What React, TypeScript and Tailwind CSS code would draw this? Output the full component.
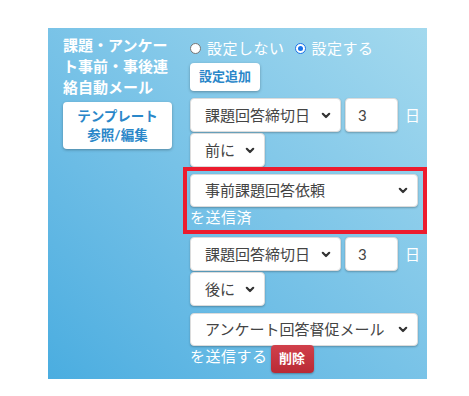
import React from "react";

const Chevron = () => (
  <svg width="10" height="7" viewBox="0 0 10 7" className="shrink-0">
    <path d="M1.8 1.8 L5 5 L8.2 1.8" fill="none" stroke="#333" strokeWidth="2.2" strokeLinecap="round" strokeLinejoin="round" />
  </svg>
);

const Sel = ({ text, w, h = "h-[34px]" }: { text: string; w: string; h?: string }) => (
  <div
    className={`${w} ${h} flex items-center justify-between bg-white rounded-[4px] border border-[#dcdcdc] shadow-[0_1px_2px_rgba(0,0,0,0.25)] pl-[14px] pr-[9px] text-[15px] text-[#444] leading-none`}
  >
    <span className="whitespace-nowrap">{text}</span>
    <Chevron />
  </div>
);

const Radio = ({ checked }: { checked: boolean }) =>
  checked ? (
    <span className="shrink-0 w-[11px] h-[11px] rounded-full bg-white border-[1.5px] border-[#1a73e8] flex items-center justify-center">
      <span className="w-[5px] h-[5px] rounded-full bg-[#1a73e8]" />
    </span>
  ) : (
    <span className="shrink-0 block w-[11px] h-[11px] rounded-full bg-white border border-[#767676]" />
  );

const Block = ({ when, mail, sentText, highlight, del }: { when: string; mail: string; sentText: string; highlight?: boolean; del?: boolean }) => (
  <div className="flex flex-col">
    <div className="flex items-center">
      <Sel text="課題回答締切日" w="w-[151px]" />
      <div className="ml-[4px] w-[53px] h-[34px] bg-white rounded-[4px] border border-[#dcdcdc] shadow-[0_1px_2px_rgba(0,0,0,0.25)] flex items-center pl-[12px] text-[15px] text-[#444]">
        3
      </div>
      <span className="ml-[7px] text-white text-[15px]">日</span>
    </div>
    <div className="mt-[1px]">
      <Sel text={when} w="w-[75px]" />
    </div>
    <div className="relative mt-[7px]">
      <Sel text={mail} w="w-[228px]" h="h-[33px]" />
      <div className="flex items-center h-[20px]">
        <span className="text-white text-[15px] tracking-[0.5px]">{sentText}</span>
        {del && (
          <span className="ml-[3px] mt-[6px] w-[43px] h-[28px] rounded-[4px] bg-gradient-to-b from-[#d1404b] to-[#b92a35] shadow-[0_1px_2px_rgba(0,0,0,0.3)] flex items-center justify-center text-white text-[13px] font-bold">
            削除
          </span>
        )}
      </div>
      {highlight && <div className="absolute -inset-[7px] border-4 border-[#ec1c2e] pointer-events-none" />}
    </div>
  </div>
);

export default function App() {
  return (
    <div className="w-[469px] h-[396px] bg-white pt-[28px] pl-[48px]" style={{ fontFamily: 'Lato, "Noto Sans CJK JP", sans-serif' }}>
      <div className="w-[379px] h-[351px] bg-gradient-to-tr from-[#4aade0] to-[#a3d9ee] flex">
        <div className="w-[142px] pl-[15px] pt-[7px] flex flex-col">
          <div className="text-white font-bold text-[15px] leading-[21px] w-[112px]">
            課題・アンケート事前・事後連絡自動メール
          </div>
          <div className="mt-[4px] w-[109px] h-[47px] bg-white rounded-[4px] shadow-[0_1px_3px_rgba(0,0,0,0.3)] flex flex-col items-center justify-center text-[#2a87c9] font-bold text-[13.5px] leading-[19px]">
            <span>テンプレート</span>
            <span>参照/編集</span>
          </div>
        </div>
        <div className="flex flex-col pt-[9px]">
          <div className="flex items-center h-[22px] text-white text-[15px] tracking-[0.5px]">
            <Radio checked={false} />
            <span className="ml-[6px]">設定しない</span>
            <span className="ml-[10px] flex"><Radio checked={true} /></span>
            <span className="ml-[6px]">設定する</span>
          </div>
          <div className="mt-[4px] w-[70px] h-[28px] bg-white rounded-[4px] shadow-[0_1px_3px_rgba(0,0,0,0.3)] flex items-center justify-center text-[#2a87c9] font-bold text-[13px]">
            設定追加
          </div>
          <div className="mt-[7px]">
            <Block when="前に" mail="事前課題回答依頼" sentText="を送信済" highlight />
          </div>
          <div className="mt-[10px]">
            <Block when="後に" mail="アンケート回答督促メール" sentText="を送信する" del />
          </div>
        </div>
      </div>
    </div>
  );
}
